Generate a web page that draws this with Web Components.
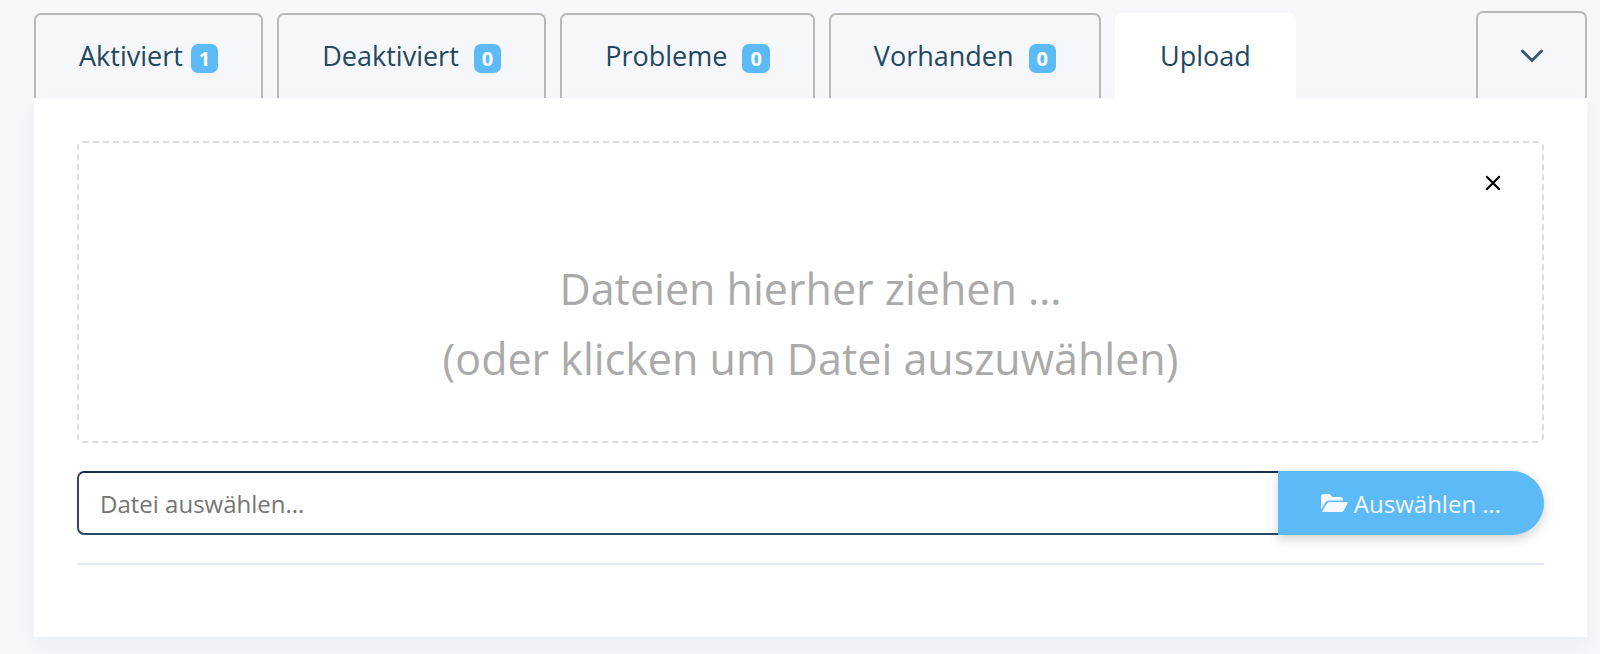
<!DOCTYPE html>
<html lang="de">
<head>
<meta charset="utf-8">
<meta name="viewport" content="width=device-width, initial-scale=1">
<title>Upload</title>
<style>
	body {
		margin: 0;
		padding: 11px 13px 17px 34px;
		background-color: #f5f7fb;
		color: #23475f;
		font-family: "Open Sans", "Noto Sans", sans-serif;
		font-size: 27px;
	}
</style>
</head>
<body>

<tab-bar>
	<tab-item count="1">Aktiviert</tab-item>
	<tab-item count="0" wide>Deaktiviert</tab-item>
	<tab-item count="0" wide>Probleme</tab-item>
	<tab-item count="0" wide>Vorhanden</tab-item>
	<tab-item active>Upload</tab-item>
	<tab-more slot="more"></tab-more>
</tab-bar>
<tab-panel>
	<drop-zone>
		<span>Dateien hierher ziehen …</span>
		<span>(oder klicken um Datei auszuwählen)</span>
	</drop-zone>
	<file-caption placeholder="Datei auswählen...">Auswählen …</file-caption>
</tab-panel>

<script>
class TabBar extends HTMLElement {
	constructor() {
		super();
		this.attachShadow({ mode: 'open' });
		this.shadowRoot.innerHTML = `
		<style>
			:host {
				display: flex;
				align-items: flex-end;
				justify-content: space-between;
			}
			.tabs {
				display: flex;
				gap: 14px;
			}
		</style>
		<div class="tabs" role="tablist"><slot></slot></div>
		<slot name="more"></slot>
		`
	}
}
customElements.define('tab-bar', TabBar);


class TabItem extends HTMLElement {
	constructor() {
		super();
		this.attachShadow({ mode: 'open' });
		this.shadowRoot.innerHTML = `
		<style>
			:host {
				display: block;
			}
			button {
				display: flex;
				align-items: center;
				gap: 8px;
				height: 85px;
				margin: 0;
				padding: 0 43px 2px;
				border: 2px solid #b8b8b8;
				border-bottom: 0;
				border-radius: 7px 7px 0 0;
				background: none;
				color: inherit;
				font: inherit;
				white-space: nowrap;
				cursor: pointer;
			}
			:host([wide]) button {
				gap: 15px;
			}
			:host([active]) button {
				border-color: #fff;
				background-color: #fff;
			}
			.badge {
				margin-top: 6px;
				padding: 0 8px;
				border-radius: 7px;
				background-color: #5cbaf6;
				color: #fff;
				font-size: 20px;
				font-weight: 700;
				line-height: 29px;
			}
			.badge:empty {
				display: none;
			}
		</style>
		<button type="button" role="tab"><slot></slot><span class="badge"></span></button>
		`
	}
	connectedCallback() {
		this.shadowRoot.querySelector(".badge").textContent = this.getAttribute("count") || ""
		this.shadowRoot.querySelector("button").setAttribute("aria-selected", this.hasAttribute("active"))
		this.addEventListener('click', this._activate);
	}
	disconnectedCallback() {
		this.removeEventListener('click', this._activate);
	}
	_activate() {
		for (const tab of this.parentNode.querySelectorAll("tab-item")) {
			tab.toggleAttribute("active", tab===this)
			tab.shadowRoot.querySelector("button").setAttribute("aria-selected", tab===this)
		}
	}
}
customElements.define('tab-item', TabItem);


class TabMore extends HTMLElement {
	constructor() {
		super();
		this.attachShadow({ mode: 'open' });
		this.shadowRoot.innerHTML = `
		<style>
			:host {
				display: block;
			}
			button {
				display: flex;
				align-items: center;
				justify-content: center;
				width: 111px;
				height: 87px;
				padding: 0;
				border: 2px solid #b8b8b8;
				border-bottom: 0;
				border-radius: 7px 7px 0 0;
				background: none;
				color: #36566c;
				cursor: pointer;
			}
		</style>
		<button type="button" aria-label="Weitere">
			<svg width="24" height="16" viewBox="0 0 24 16" fill="none" stroke="currentColor" stroke-width="2.800" stroke-linecap="round" stroke-linejoin="miter"><path d="M2.500 3l9.500 9.500 9.500-9.500"/></svg>
		</button>
		`
	}
}
customElements.define('tab-more', TabMore);


class TabPanel extends HTMLElement {
	constructor() {
		super();
		this.attachShadow({ mode: 'open' });
		this.shadowRoot.innerHTML = `
		<style>
			:host {
				display: block;
				padding: 43px 43px 72px;
				background-color: #fff;
				box-shadow: 0 8px 16px rgba(60, 90, 110, 0.06);
			}
			hr {
				height: 2px;
				margin: 28px 0 0;
				border: 0;
				background-color: #e4e9f2;
			}
		</style>
		<slot></slot>
		<hr>
		`
	}
}
customElements.define('tab-panel', TabPanel);


class DropZone extends HTMLElement {
	constructor() {
		super();
		this.attachShadow({ mode: 'open' });
		this.shadowRoot.innerHTML = `
		<style>
			:host {
				display: block;
				padding: 27px 36px 47px;
				border: 2px dashed #dcdcdc;
				border-radius: 6px;
				cursor: pointer;
			}
			.top {
				display: flex;
				justify-content: flex-end;
			}
			.close {
				display: flex;
				padding: 4px;
				border: 0;
				background: none;
				color: #000;
				cursor: pointer;
			}
			.title {
				display: flex;
				flex-direction: column;
				align-items: center;
				padding-top: 58px;
				color: #aaa;
				font-size: 43px;
				line-height: 70px;
			}
		</style>
		<div class="top">
			<button class="close" type="button" aria-label="Schließen">
				<svg width="18" height="18" viewBox="0 0 18 18" fill="none" stroke="currentColor" stroke-width="2.200" stroke-linecap="round"><path d="M2.800 2.800l12.400 12.400M15.200 2.800L2.800 15.200"/></svg>
			</button>
		</div>
		<div class="title"><slot></slot></div>
		`
	}
}
customElements.define('drop-zone', DropZone);


class FileCaption extends HTMLElement {
	constructor() {
		super();
		this.attachShadow({ mode: 'open' });
		this.shadowRoot.innerHTML = `
		<style>
			:host {
				display: flex;
				height: 64px;
				margin-top: 28px;
				font-size: 24px;
			}
			input {
				flex: 1;
				min-width: 0;
				box-sizing: border-box;
				margin: 0;
				padding: 0 21px;
				border: 2px solid #2b4a60;
				border-top-color: #1c2b50;
				border-right: 0;
				border-radius: 7px 0 0 7px;
				outline: 0;
				background-color: #fff;
				color: #23475f;
				font: inherit;
			}
			input::placeholder {
				color: #757575;
				opacity: 1;
			}
			button {
				display: flex;
				align-items: center;
				gap: 6px;
				padding: 0 43px;
				border: 0;
				border-radius: 0 32px 32px 0;
				background-color: #5cbaf6;
				box-shadow: 0 4px 12px rgba(0, 0, 0, 0.18);
				color: #f5f7fb;
				font: inherit;
				white-space: nowrap;
				cursor: pointer;
			}
		</style>
		<input type="text" aria-label="Datei auswählen" readonly>
		<button type="button">
			<svg width="27" height="18" viewBox="0 0 27 18" fill="currentColor"><path d="M0 14.500V2.500Q0 0 2.500 0H8.500L11.500 3H19.500Q22 3 22 5.500V6.500H8Q5.500 6.500 4.200 8.500L0.500 15Z"/><path d="M1.500 16.800L5.800 9.300Q6.500 8 8 8H25.800Q27.400 8 26.600 9.500L22.800 16.500Q22 18 20.300 18H2.200Q1 18 1.500 16.800Z"/></svg>
			<slot></slot>
		</button>
		`
	}
	connectedCallback() {
		this.shadowRoot.querySelector("input").placeholder = this.getAttribute("placeholder")
	}
}
customElements.define('file-caption', FileCaption);
</script>
</body>
</html>
